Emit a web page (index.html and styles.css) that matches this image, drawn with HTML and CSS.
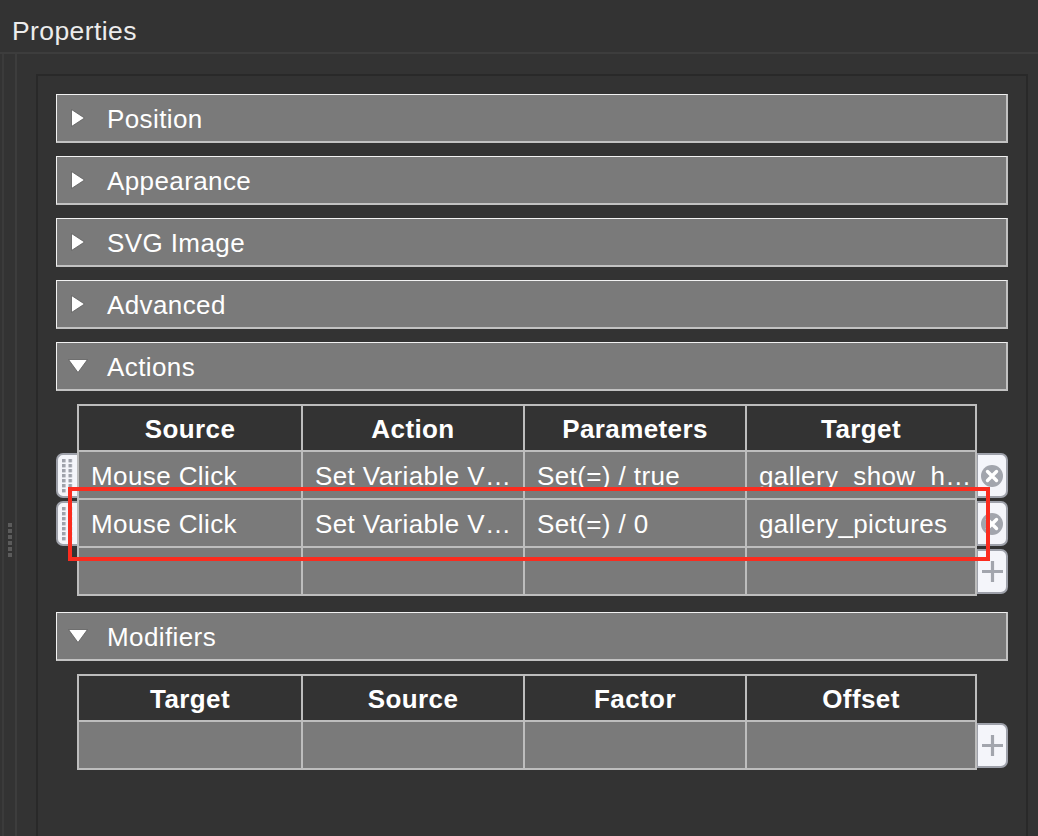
FILE: index.html
```html
<!DOCTYPE html>
<html lang="en">
<head>
    <meta charset="UTF-8">
    <meta name="viewport" content="width=device-width, initial-scale=1.0">
    <title>Properties</title>
    <link rel="stylesheet" href="styles.css">
</head>
<body>
    <svg class="defs" width="0" height="0" aria-hidden="true">
        <defs>
            <pattern id="grip" width="6.5" height="5" patternUnits="userSpaceOnUse">
                <rect width="3.5" height="3.4" fill="#9ea1aa"/>
            </pattern>
        </defs>
    </svg>

    <div class="title">Properties</div>

    <div class="main">
        <div class="splitter"><span class="splitter-grip"></span></div>

        <div class="dock">
            <div class="inner">
                <div class="section">
                    <div class="bar">
                        <span class="arrow"><svg width="14" height="18" viewBox="0 0 14 18"><polygon points="0.5,0.5 13.5,9 0.5,17.5" fill="#fff" stroke="#5a5a5a" stroke-width="0.8"/></svg></span>
                        Position
                    </div>
                </div>
                <div class="section">
                    <div class="bar">
                        <span class="arrow"><svg width="14" height="18" viewBox="0 0 14 18"><polygon points="0.5,0.5 13.5,9 0.5,17.5" fill="#fff" stroke="#5a5a5a" stroke-width="0.8"/></svg></span>
                        Appearance
                    </div>
                </div>
                <div class="section">
                    <div class="bar">
                        <span class="arrow"><svg width="14" height="18" viewBox="0 0 14 18"><polygon points="0.5,0.5 13.5,9 0.5,17.5" fill="#fff" stroke="#5a5a5a" stroke-width="0.8"/></svg></span>
                        SVG Image
                    </div>
                </div>
                <div class="section">
                    <div class="bar">
                        <span class="arrow"><svg width="14" height="18" viewBox="0 0 14 18"><polygon points="0.5,0.5 13.5,9 0.5,17.5" fill="#fff" stroke="#5a5a5a" stroke-width="0.8"/></svg></span>
                        Advanced
                    </div>
                </div>

                <div class="section">
                    <div class="bar">
                        <span class="arrow"><svg width="20" height="14" viewBox="0 0 20 14"><polygon points="0.5,0.5 19.5,0.5 10,13.5" fill="#fff" stroke="#5a5a5a" stroke-width="0.8"/></svg></span>
                        Actions
                    </div>
                    <div class="grid">
                        <div class="row head">
                            <span class="slot"></span>
                            <div class="cells">
                                <div class="cell">Source</div>
                                <div class="cell">Action</div>
                                <div class="cell">Parameters</div>
                                <div class="cell">Target</div>
                            </div>
                        </div>
                        <div class="row">
                            <span class="handle"><svg width="11" height="34"><rect width="11" height="34" fill="url(#grip)"/></svg></span>
                            <div class="cells">
                                <div class="cell">Mouse Click</div>
                                <div class="cell">Set Variable V…</div>
                                <div class="cell">Set(=) / true</div>
                                <div class="cell">gallery_show_h…</div>
                            </div>
                            <button class="side-btn" title="Remove">
                                <svg width="22" height="22" viewBox="0 0 22 22"><circle cx="11" cy="11" r="11" fill="#a2a5ad"/><path d="M6.5 6.5 L15.5 15.5 M15.5 6.5 L6.5 15.5" stroke="#fff" stroke-width="3.4" stroke-linecap="round"/></svg>
                            </button>
                        </div>
                        <div class="row">
                            <span class="handle"><svg width="11" height="34"><rect width="11" height="34" fill="url(#grip)"/></svg></span>
                            <div class="cells">
                                <div class="cell">Mouse Click</div>
                                <div class="cell">Set Variable V…</div>
                                <div class="cell">Set(=) / 0</div>
                                <div class="cell">gallery_pictures</div>
                            </div>
                            <button class="side-btn" title="Remove">
                                <svg width="22" height="22" viewBox="0 0 22 22"><circle cx="11" cy="11" r="11" fill="#a2a5ad"/><path d="M6.5 6.5 L15.5 15.5 M15.5 6.5 L6.5 15.5" stroke="#fff" stroke-width="3.4" stroke-linecap="round"/></svg>
                            </button>
                        </div>
                        <div class="row">
                            <span class="slot"></span>
                            <div class="cells">
                                <div class="cell"></div>
                                <div class="cell"></div>
                                <div class="cell"></div>
                                <div class="cell"></div>
                            </div>
                            <button class="side-btn" title="Add">
                                <svg width="21" height="21" viewBox="0 0 21 21"><path d="M10.5 0 V21 M0 10.5 H21" stroke="#a2a5ad" stroke-width="3.2"/></svg>
                            </button>
                        </div>
                    </div>
                </div>

                <div class="section">
                    <div class="bar">
                        <span class="arrow"><svg width="20" height="14" viewBox="0 0 20 14"><polygon points="0.5,0.5 19.5,0.5 10,13.5" fill="#fff" stroke="#5a5a5a" stroke-width="0.8"/></svg></span>
                        Modifiers
                    </div>
                    <div class="grid">
                        <div class="row head">
                            <span class="slot"></span>
                            <div class="cells">
                                <div class="cell">Target</div>
                                <div class="cell">Source</div>
                                <div class="cell">Factor</div>
                                <div class="cell">Offset</div>
                            </div>
                        </div>
                        <div class="row">
                            <span class="slot"></span>
                            <div class="cells">
                                <div class="cell"></div>
                                <div class="cell"></div>
                                <div class="cell"></div>
                                <div class="cell"></div>
                            </div>
                            <button class="side-btn" title="Add">
                                <svg width="21" height="21" viewBox="0 0 21 21"><path d="M10.5 0 V21 M0 10.5 H21" stroke="#a2a5ad" stroke-width="3.2"/></svg>
                            </button>
                        </div>
                    </div>
                </div>
            </div>
        </div>
    </div>

    <div class="highlight"></div>
</body>
</html>
```

FILE: styles.css
```css
* {
    margin: 0;
    padding: 0;
    box-sizing: border-box;
}

html, body {
    height: 100%;
    overflow: hidden;
}

body {
    background-color: #333333;
    color: #ffffff;
    font-family: "Liberation Sans", Arial, sans-serif;
    font-size: 26px;
    letter-spacing: 0.4px;
}

.defs {
    position: absolute;
}

.title {
    height: 52px;
    padding: 16px 12px 0;
    line-height: 30px;
    font-size: 26.5px;
    color: #ececec;
}

.main {
    display: flex;
    height: calc(100vh - 52px);
    border-top: 2px solid #3d3d3d;
}

.splitter {
    width: 13px;
    margin-left: 2px;
    border-left: 2px solid #3b3b3b;
    flex-shrink: 0;
}

.splitter-grip {
    display: block;
    width: 4px;
    height: 34px;
    margin: 469px 0 0 4px;
    background-image: linear-gradient(#5b5b5b 4px, transparent 4px);
    background-size: 4px 6px;
}

.dock {
    flex: 1;
    display: flex;
    flex-direction: column;
    border-left: 2px solid #3d3d3d;
    padding: 20px 0 0 19px;
}

.inner {
    flex: 1;
    margin-right: 11px;
    border-top: 2px solid #292929;
    border-left: 2px solid #292929;
    border-right: 2px solid #292929;
    padding: 18px 18px 0;
}

.section {
    margin-bottom: 13px;
}

.bar {
    display: flex;
    align-items: center;
    height: 49px;
    padding: 2px 0 0 10px;
    background-color: #7a7a7a;
    border-top: 1px solid #f2f2f2;
    border-left: 1px solid #f2f2f2;
    border-right: 2px solid #c2c2c2;
    border-bottom: 2px solid #c2c2c2;
    line-height: 30px;
}

.arrow {
    display: flex;
    justify-content: center;
    align-items: center;
    flex-shrink: 0;
    width: 22px;
    margin: -2px 18px 0 0;
}

.arrow svg {
    display: block;
    flex-shrink: 0;
}

.grid {
    margin-top: 13px;
    padding-bottom: 3px;
}

.row {
    display: flex;
    height: 48px;
}

.slot,
.handle {
    width: 21px;
    flex-shrink: 0;
}

.handle {
    display: flex;
    align-items: center;
    padding-left: 4px;
    margin: 1px 0 2px;
    background-color: #f4f5fa;
    border: 2px solid #9ea1aa;
    border-right: none;
    border-radius: 7px 0 0 7px;
}

.handle svg {
    display: block;
}

.cells {
    display: grid;
    grid-template-columns: 224px 222px 222px 230px;
    width: 900px;
    border-left: 2px solid #bdbdbd;
    background-color: #7a7a7a;
}

.cell {
    display: flex;
    align-items: center;
    padding: 2px 10px 0 12px;
    border-right: 2px solid #bdbdbd;
    border-bottom: 2px solid #bdbdbd;
    white-space: nowrap;
    overflow: hidden;
    text-overflow: ellipsis;
    line-height: 30px;
}

.head .cells {
    background-color: #333333;
}

.head .cell {
    justify-content: center;
    padding: 2px 4px 0;
    border-top: 2px solid #bdbdbd;
    font-weight: bold;
}

.side-btn {
    display: flex;
    justify-content: center;
    align-items: center;
    width: 31px;
    margin: 1px 0 2px;
    background-color: #f4f5fa;
    border: 2px solid #9ea1aa;
    border-left: 1px solid #9ea1aa;
    border-radius: 0 7px 7px 0;
    cursor: pointer;
}

.highlight {
    position: absolute;
    left: 68px;
    top: 487px;
    width: 922px;
    height: 74px;
    border: 4px solid #fb2c1f;
    pointer-events: none;
}
```
